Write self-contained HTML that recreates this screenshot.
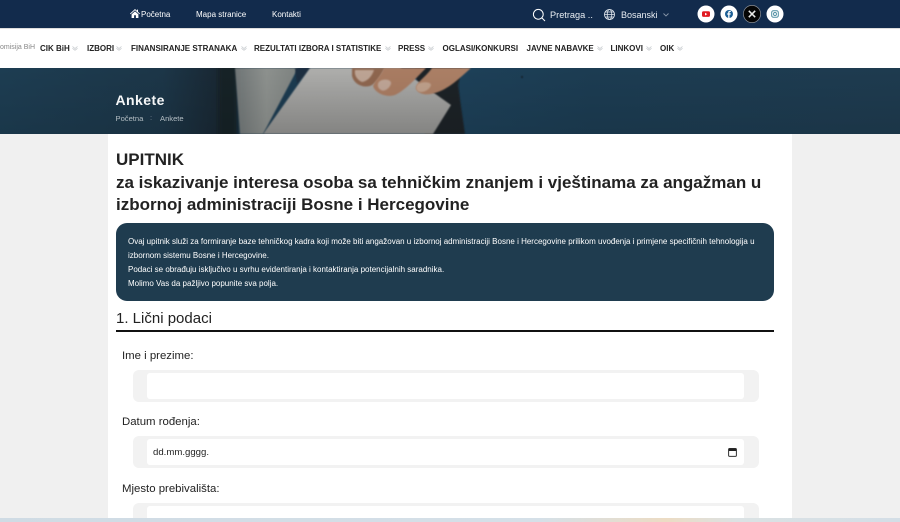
<!DOCTYPE html>
<html lang="bs"><head><meta charset="utf-8"><title>Ankete</title>
<style>
*{box-sizing:border-box}
html,body{margin:0;padding:0;width:900px;height:522px;overflow:hidden;background:#f0f0f0;font-family:"Liberation Sans",sans-serif}
.a{position:absolute;white-space:nowrap}
#top{position:absolute;left:0;top:0;width:900px;height:28px;background:#122b4c;color:#fff;font-size:8px}
#nav{position:absolute;left:0;top:28px;width:900px;height:40px;background:#fff;border-top:1px solid #ddd}
#nav .m{position:absolute;top:15px;font-size:8px;font-weight:bold;color:#222;white-space:nowrap}
#nav svg{position:absolute;top:16.500px}
#hero{position:absolute;left:0;top:68px;width:900px;height:66px;overflow:hidden;background:#1c3a4e}
#card{position:absolute;left:108px;top:134px;width:684px;height:384px;background:#fff;overflow:hidden}
h1{position:absolute;left:8px;top:15px;margin:0;font-size:17px;line-height:22.5px;font-weight:bold;color:#222;white-space:nowrap}
#box{position:absolute;left:8px;top:89px;width:658px;height:78px;background:#1f3c4f;border-radius:11px;color:#fff;font-size:8px;line-height:14px;padding:11.500px 12px}
#box div{white-space:nowrap}
.lbl{position:absolute;left:14px;font-size:11.4px;color:#222;white-space:nowrap}
.wrap{position:absolute;left:25px;width:626px;height:32px;background:#f2f2f2;border-radius:6px}
.inp{position:absolute;left:14px;top:3px;width:597px;height:26px;background:#fff;border-radius:3px;font-size:9.6px;color:#222;padding:8px 6px 0}
#bot{position:absolute;left:0;top:518px;width:900px;height:4px;background:linear-gradient(90deg,#cfdbe4 0,#d5e0e8 60%,#ecdcc4 74%,#dbe2e4 82%,#d3dee6 100%)}
</style></head><body>

<div id="top">
<svg class="a" style="left:130px;top:9px" width="10" height="9" viewBox="0 0 10 9"><path d="M5 0L0 4.6l.6.6L5 1.3l4.4 3.9.6-.6L8 2.8V.6H6.900v1.200zM1.600 5.400V9h2.500V6.300h1.800V9h2.500V5.400L5 2.400z" fill="#fff"/></svg>
<span class="a" style="left:141px;top:9.500px">Početna</span>
<span class="a" style="left:196px;top:9.500px">Mapa stranice</span>
<span class="a" style="left:272px;top:9.500px">Kontakti</span>
<svg class="a" style="left:532px;top:8px" width="14" height="14" viewBox="0 0 14 14" fill="none" stroke="#fff" stroke-width="1"><circle cx="6.300" cy="6.300" r="4.900"/><path d="M10 10l3 3"/></svg>
<span class="a" style="left:550px;top:9.500px;font-size:9.2px;color:#e8edf2">Pretraga ..</span>
<svg class="a" style="left:604px;top:9px" width="11" height="11" viewBox="0 0 11 11" fill="none" stroke="#e2e8ee" stroke-width=".8"><circle cx="5.500" cy="5.500" r="5"/><ellipse cx="5.500" cy="5.500" rx="2.300" ry="5"/><path d="M.5 5.500h10M1.200 3h8.600M1.200 8h8.600"/></svg>
<span class="a" style="left:621px;top:9.500px;font-size:9px;color:#e8edf2">Bosanski</span>
<svg class="a" style="left:663px;top:13px" width="6" height="4" viewBox="0 0 6 4" fill="none" stroke="#8796a8" stroke-width=".9"><path d="M.5.500L3 3 5.500.5"/></svg>
<svg class="a" style="left:696px;top:4px" width="90" height="20" viewBox="0 0 90 20">
<circle cx="10" cy="10" r="8.500" fill="#fff"/><rect x="6" y="7.300" width="8" height="5.600" rx="1.500" fill="#e01b22"/><path d="M9 8.700v2.800l2.300-1.400z" fill="#fff"/>
<circle cx="33" cy="10" r="8.500" fill="#fff"/><circle cx="33" cy="10" r="4" fill="#1c5f96"/><path d="M33.500 14v-3.400h1.100l.2-1.200h-1.300v-.8c0-.4.200-.6.600-.6h.7V6.900h-1c-1.100 0-1.600.6-1.600 1.600v.9h-1v1.200h1V14z" fill="#fff"/>
<circle cx="56" cy="10" r="8.600" fill="#050505" stroke="#8a8f96" stroke-width=".7"/><path d="M52.800 6.800l6.400 6.400M59.200 6.800l-6.400 6.400" stroke="#e8e8e8" stroke-width="1.500"/>
<circle cx="79" cy="10" r="8.500" fill="#fff"/><rect x="75.700" y="6.700" width="6.600" height="6.600" rx="1.700" fill="none" stroke="#4d8da0" stroke-width="1"/><circle cx="79" cy="10" r="1.500" fill="none" stroke="#4d8da0" stroke-width=".9"/>
</svg>
</div>

<div id="nav">
<span class="a" style="left:0;top:15px;font-size:7px;color:#888">omisija BiH</span>
<span class="m" style="left:40px">CIK BiH</span>
<span class="m" style="left:87px">IZBORI</span>
<span class="m" style="left:131px">FINANSIRANJE STRANAKA</span>
<span class="m" style="left:254px">REZULTATI IZBORA I STATISTIKE</span>
<span class="m" style="left:398px">PRESS</span>
<span class="m" style="left:442.500px">OGLASI/KONKURSI</span>
<span class="m" style="left:526.500px">JAVNE NABAVKE</span>
<span class="m" style="left:610.500px">LINKOVI</span>
<span class="m" style="left:660px">OIK</span>
<svg style="left:72px" width="6" height="5" viewBox="0 0 6 5" fill="none" stroke="#c4c8cc" stroke-width=".8"><path d="M.5.500L3 2.500 5.500.5M.5 2.300L3 4.300 5.500 2.300"/></svg>
<svg style="left:116px" width="6" height="5" viewBox="0 0 6 5" fill="none" stroke="#c4c8cc" stroke-width=".8"><path d="M.5.500L3 2.500 5.500.5M.5 2.300L3 4.300 5.500 2.300"/></svg>
<svg style="left:241px" width="6" height="5" viewBox="0 0 6 5" fill="none" stroke="#c4c8cc" stroke-width=".8"><path d="M.5.500L3 2.500 5.500.5M.5 2.300L3 4.300 5.500 2.300"/></svg>
<svg style="left:385px" width="6" height="5" viewBox="0 0 6 5" fill="none" stroke="#c4c8cc" stroke-width=".8"><path d="M.5.500L3 2.500 5.500.5M.5 2.300L3 4.300 5.500 2.300"/></svg>
<svg style="left:428px" width="6" height="5" viewBox="0 0 6 5" fill="none" stroke="#c4c8cc" stroke-width=".8"><path d="M.5.500L3 2.500 5.500.5M.5 2.300L3 4.300 5.500 2.300"/></svg>
<svg style="left:597px" width="6" height="5" viewBox="0 0 6 5" fill="none" stroke="#c4c8cc" stroke-width=".8"><path d="M.5.500L3 2.500 5.500.5M.5 2.300L3 4.300 5.500 2.300"/></svg>
<svg style="left:646px" width="6" height="5" viewBox="0 0 6 5" fill="none" stroke="#c4c8cc" stroke-width=".8"><path d="M.5.500L3 2.500 5.500.5M.5 2.300L3 4.300 5.500 2.300"/></svg>
<svg style="left:677px" width="6" height="5" viewBox="0 0 6 5" fill="none" stroke="#c4c8cc" stroke-width=".8"><path d="M.5.500L3 2.500 5.500.5M.5 2.300L3 4.300 5.500 2.300"/></svg>
</div>

<div id="hero">
<svg class="a" style="left:0;top:0" width="900" height="66" viewBox="0 0 900 66">
<defs>
<linearGradient id="g1" x1="0" x2="1" y1="0" y2="0"><stop offset="0" stop-color="#1d3d52"/><stop offset=".7" stop-color="#1c3648"/><stop offset="1" stop-color="#18242e"/></linearGradient>
<linearGradient id="g3" x1="0" x2="0" y1="0" y2="1"><stop offset="0" stop-color="#aeaeac"/><stop offset="1" stop-color="#929290"/></linearGradient>
<linearGradient id="g4" x1="0" x2="1" y1="0" y2="0"><stop offset="0" stop-color="#6f7576"/><stop offset=".5" stop-color="#8d918e"/><stop offset="1" stop-color="#7d8280"/></linearGradient>
<linearGradient id="g5" x1="0" x2="1" y1="0" y2="0"><stop offset="0" stop-color="#1d4058"/><stop offset=".3" stop-color="#1c3c52"/><stop offset="1" stop-color="#1e3b4f"/></linearGradient>
<filter id="b"><feGaussianBlur stdDeviation=".8"/></filter>
<filter id="b2"><feGaussianBlur stdDeviation="2.500"/></filter>
<linearGradient id="sh" x1="0" x2="0" y1="0" y2="1"><stop offset="0" stop-color="#000" stop-opacity="0"/><stop offset="1" stop-color="#000" stop-opacity=".1"/></linearGradient>
</defs>
<rect width="900" height="66" fill="#1c3b50"/>
<rect x="460" width="440" height="66" fill="url(#g5)"/>
<rect width="232" height="66" fill="url(#g1)"/>
<rect x="218" y="-5" width="20" height="76" fill="#172027" filter="url(#b2)"/>
<path d="M235 0H298L263 66H240z" fill="url(#g4)" filter="url(#b)"/>
<path d="M295 0h16l-14 16z" fill="#1c2d3f" filter="url(#b)"/>
<path d="M415 0H462L458 17 465 66H425z" fill="#1b2026" filter="url(#b)"/>
<path d="M310 0H400L427 20 451 37 433 66H263z" fill="url(#g3)" filter="url(#b)"/>
<path d="M352 0H385C381 7 377 15 370 18 362 20 354 16 352 8z" fill="#8e6650" filter="url(#b)"/>
<path d="M355 2H374C372 8 368 13 362 14 357 12 354 7 355 2z" fill="#bda494" filter="url(#b)"/>
<path d="M384 0H426C418 8 406 22 395 27 386 30 375 25 373 18 375 12 381 8 384 0z" fill="#a97c62" filter="url(#b)"/>
<path d="M380 13C385 10 392 12 391 16 389 21 384 24 381 22 377 20 377 15 380 13z" fill="#bfa596" filter="url(#b)"/>
<path d="M432 0H471C463 7 450 20 438 24 428 28 419 27 416 21 415 15 424 11 432 0z" fill="#ab7f65" filter="url(#b)"/>
<path d="M418 16C423 13 431 14 431 17 430 21 425 24 421 24 416 24 415 19 418 16z" fill="#bfa08b" filter="url(#b)"/>
<circle cx="522" cy="9" r="1.100" fill="#0a1014" filter="url(#b)" opacity=".7"/>
<rect width="900" height="66" fill="url(#sh)"/>
</svg>
<span class="a" style="left:115.500px;top:24px;font-size:14px;font-weight:bold;color:#f4f6f7;letter-spacing:.45px">Ankete</span>
<span class="a" style="left:115.500px;top:46px;font-size:7.600px;color:#b4bec4">Početna</span>
<span class="a" style="left:150px;top:45px;font-size:7.600px;color:#7d8d97">:</span>
<span class="a" style="left:160px;top:46px;font-size:7.600px;color:#b4bec4">Ankete</span>
</div>

<div id="card">
<h1>UPITNIK<br>za iskazivanje interesa osoba sa tehničkim znanjem i vještinama za angažman u<br>izbornoj administraciji Bosne i Hercegovine</h1>
<div id="box">
<div>Ovaj upitnik služi za formiranje baze tehničkog kadra koji može biti angažovan u izbornoj administraciji Bosne i Hercegovine prilikom uvođenja i primjene specifičnih tehnologija u</div>
<div>izbornom sistemu Bosne i Hercegovine.</div>
<div>Podaci se obrađuju isključivo u svrhu evidentiranja i kontaktiranja potencijalnih saradnika.</div>
<div>Molimo Vas da pažljivo popunite sva polja.</div>
</div>
<div class="a" style="left:8px;top:175.500px;font-size:15px;color:#222">1. Lični podaci</div>
<div class="a" style="left:8px;top:195.500px;width:658px;height:2px;background:#111"></div>
<div class="lbl" style="top:216px">Ime i prezime:</div>
<div class="wrap" style="top:236px"><div class="inp"></div></div>
<div class="lbl" style="top:282px">Datum rođenja:</div>
<div class="wrap" style="top:302px"><div class="inp">dd.mm.gggg.
<svg class="a" style="left:581px;top:8px" width="9" height="10" viewBox="0 0 9 10" fill="none"><rect x=".6" y="1.500" width="7.800" height="7.900" rx="1" stroke="#333" stroke-width="1"/><rect x=".6" y="1.500" width="7.800" height="2.500" fill="#222"/></svg></div></div>
<div class="lbl" style="top:349px">Mjesto prebivališta:</div>
<div class="wrap" style="top:369px"><div class="inp"></div></div>
</div>
<div id="bot"></div>
</body></html>
